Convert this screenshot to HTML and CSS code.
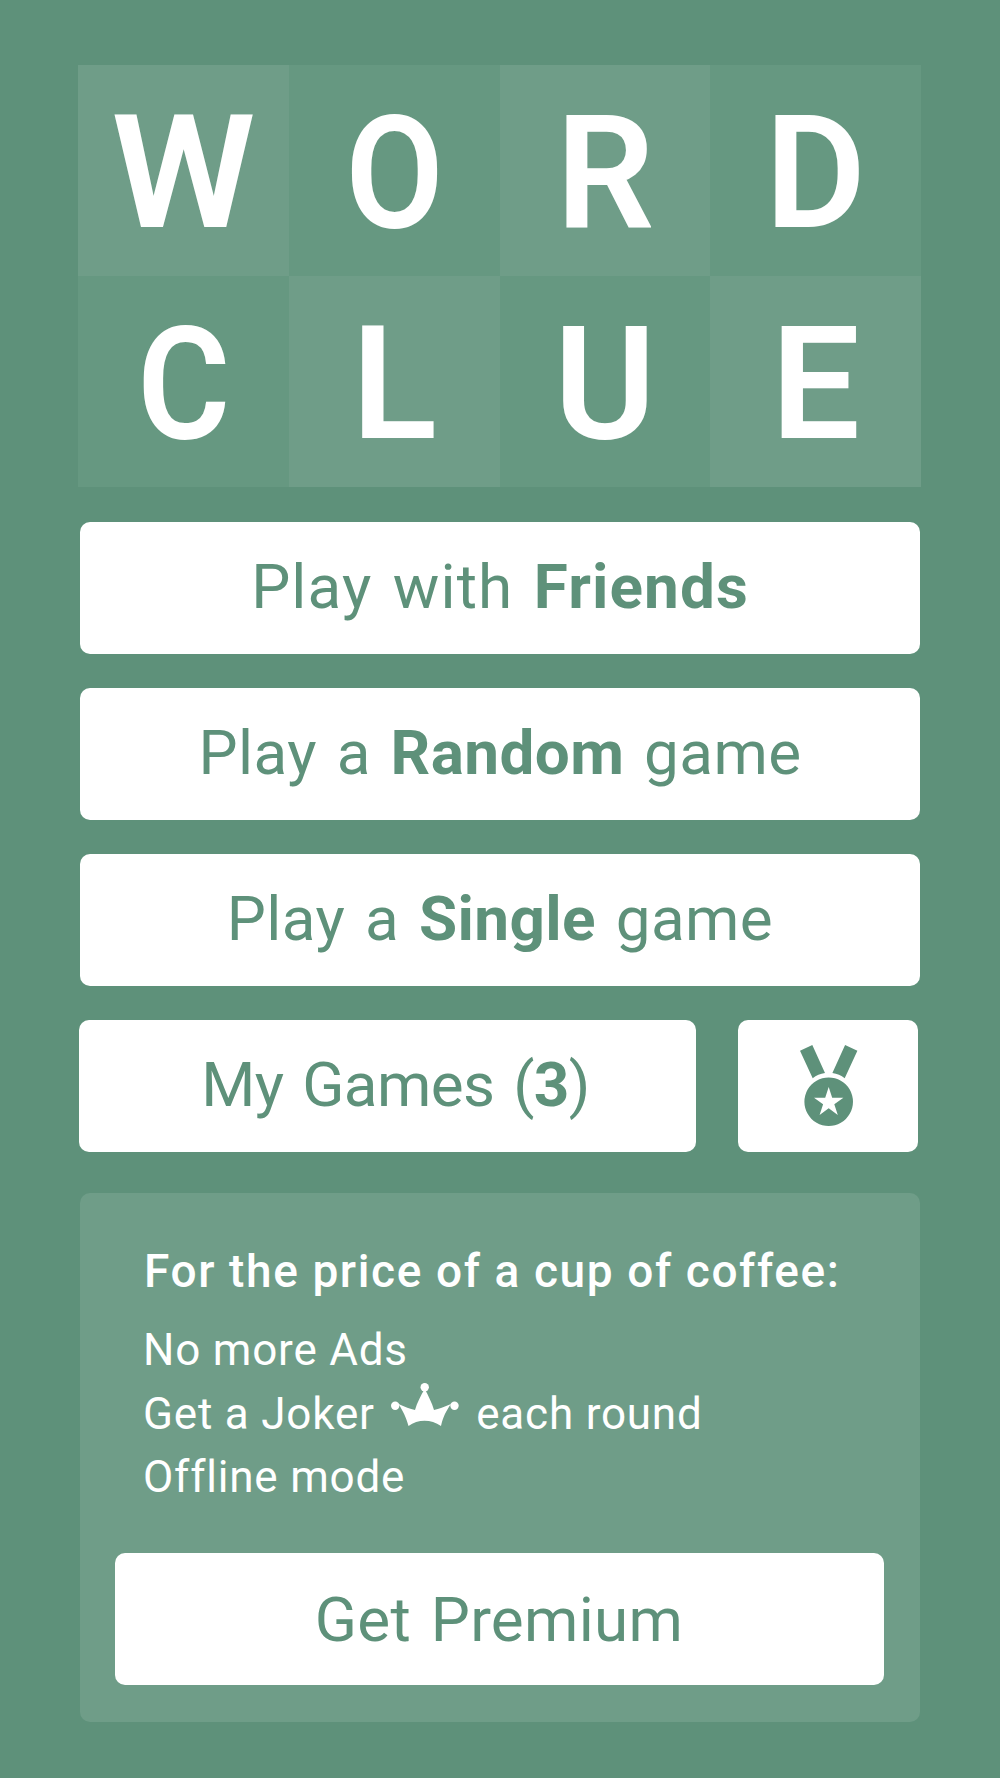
FILE: index.html
```html
<!DOCTYPE html>
<html lang="en">
<head>
<meta charset="utf-8">
<title>Word Clue</title>
<link rel="stylesheet" href="styles.css">
</head>
<body>
<main class="page">
  <h1 class="logo">
    <span class="tile tile-light"><span class="glyph glyph-wide">W</span></span>
    <span class="tile tile-dark"><span class="glyph glyph-round">O</span></span>
    <span class="tile tile-light"><span class="glyph glyph-mid">R</span></span>
    <span class="tile tile-dark"><span class="glyph glyph-mid">D</span></span>
    <span class="tile tile-dark"><span class="glyph glyph-round">C</span></span>
    <span class="tile tile-light"><span class="glyph">L</span></span>
    <span class="tile tile-dark"><span class="glyph glyph-mid">U</span></span>
    <span class="tile tile-light"><span class="glyph">E</span></span>
  </h1>
  <nav class="menu">
    <button class="btn btn-friends"><span>Play with <b>Friends</b></span></button>
    <button class="btn btn-game"><span>Play a <b>Random</b> game</span></button>
    <button class="btn btn-game"><span>Play a <b>Single</b> game</span></button>
    <div class="row">
      <button class="btn btn-games"><span>My Games (<b>3</b>)</span></button>
      <button class="btn btn-medal" aria-label="Achievements">
        <svg class="medal" viewBox="0 0 57.400 81" width="57.400" height="81">
          <path d="M0 5.700 L12.300 0 L25 28 Q18 29 12.700 33.300 Z" />
          <path d="M57.400 5.700 L45.100 0 L32.400 28 Q39.400 29 44.700 33.300 Z" />
          <path fill-rule="evenodd" d="M28.700 32.400 a24.300 24.300 0 1 1 -0.010 0 Z M28.700 42 L32.200 52.700 L43.400 52.700 L34.300 59.300 L37.800 70 L28.700 63.300 L19.600 70 L23.100 59.300 L14 52.700 L25.200 52.700 Z" />
        </svg>
      </button>
    </div>
  </nav>
  <section class="promo">
    <h2 class="promo-title">For the price of a cup of coffee:</h2>
    <ul class="perks">
      <li>No more Ads</li>
      <li>Get a Joker <svg class="joker" viewBox="0 0 68 44" width="68" height="44">
          <circle cx="33.700" cy="4.200" r="4.200" />
          <circle cx="4.200" cy="22.700" r="4.200" />
          <circle cx="63.500" cy="22.700" r="4.200" />
          <path d="M33.700 6 C37 12 41 20 43 27 C48 26 53 24 60 21 C55 28 52 34 50 43 C40 36 27 36 17.500 43 C15 34 12 28 7.500 21 C14 24 19 26 24 27 C26 20 30 12 33.700 6 Z" />
        </svg> each round</li>
      <li>Offline mode</li>
    </ul>
    <button class="btn btn-premium"><span>Get Premium</span></button>
  </section>
</main>
</body>
</html>
```
FILE: styles.css
```css
* {
  box-sizing: border-box;
}

html,
body {
  margin: 0;
  height: 100%;
}

body {
  background: #5e917a;
  font-family: Roboto, "Liberation Sans", sans-serif;
  color: #fff;
}

.page {
  display: flex;
  flex-direction: column;
  padding: 65px 80px 0 78px;
  width: 1000px;
}

.logo {
  display: grid;
  grid-template-columns: repeat(4, 210.75px);
  grid-auto-rows: 211px;
  margin: 0;
  font-size: 158px;
  font-weight: 600;
  line-height: 1;
}

.tile {
  display: flex;
  align-items: center;
  justify-content: center;
  padding-top: 5px;
}

.tile-light {
  background: #6f9d88;
}

.tile-dark {
  background: #669881;
}

.glyph {
  display: block;
}

.glyph-wide {
  transform: scaleX(1.04);
}

.glyph-round {
  transform: scaleX(0.9);
}

.glyph-mid {
  transform: scaleX(0.98);
}

.menu {
  display: flex;
  flex-direction: column;
  gap: 34px;
  margin: 35px 0 0 2px;
}

.btn {
  display: flex;
  align-items: center;
  justify-content: center;
  width: 840px;
  height: 132px;
  padding: 0;
  border: 0;
  border-radius: 10px;
  background: #fff;
  color: #5e917a;
  font-family: inherit;
  font-size: 62px;
  font-weight: 400;
  letter-spacing: 0.3px;
  word-spacing: 4px;
}

.btn b {
  font-weight: 700;
}

.btn-friends {
  letter-spacing: 1.100px;
  padding-bottom: 4px;
}

.btn-game {
  letter-spacing: 0.400px;
  padding-bottom: 4px;
}

.row {
  display: flex;
  gap: 41.500px;
  margin-left: -1px;
}

.btn-games {
  width: 617px;
  padding: 0 0 4px 16px;
  letter-spacing: -0.600px;
}

.btn-medal {
  width: 180px;
  padding: 0 0 2px 3px;
}

.medal {
  fill: #5e917a;
}

.promo {
  margin: 41px 0 0 2px;
  width: 840px;
  height: 529px;
  padding: 46px 34.500px 0;
  background: #6f9d88;
  border-radius: 10px;
}

.promo-title {
  margin: 0 0 0 29.500px;
  font-size: 46px;
  font-weight: 500;
  line-height: 64px;
  letter-spacing: 1.600px;
}

.perks {
  margin: 16px 0 0 28.500px;
  padding: 0;
  list-style: none;
  font-size: 44px;
  font-weight: 400;
  line-height: 63.500px;
  letter-spacing: 0.800px;
}

.joker {
  fill: #fff;
  margin: 0 5px;
  vertical-align: 2px;
}

.btn-premium {
  width: 769px;
  margin-top: 43.500px;
}
```
